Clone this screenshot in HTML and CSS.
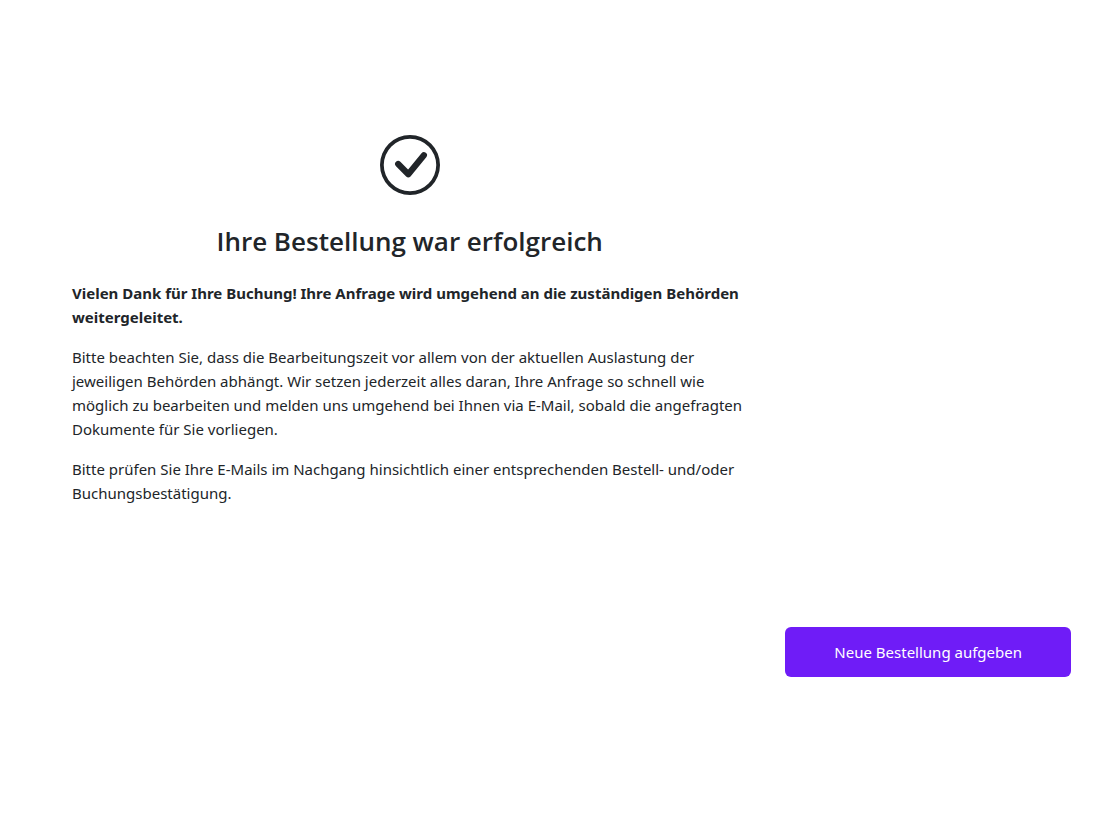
FILE: index.html
```
<!DOCTYPE html>
<html lang="de">
<head>
    <meta charset="UTF-8">
    <meta name="viewport" content="width=device-width, initial-scale=1.0">
    <title>Bestellung erfolgreich</title>
    <link rel="stylesheet" href="styles.css">
</head>
<body>
    <main class="page">
        <section class="confirmation">
            <!-- Check circle -->
            <svg class="confirmation-icon" viewBox="0 0 16 16" fill="currentColor" aria-hidden="true">
                <path d="M8 15A7 7 0 1 1 8 1a7 7 0 0 1 0 14zm0 1A8 8 0 1 0 8 0a8 8 0 0 0 0 16z"/>
                <path d="M4.85 7.75 7.55 10.45 11.7 5.4" fill="none" stroke="currentColor" stroke-width="1.65" stroke-linecap="round" stroke-linejoin="round"/>
            </svg>
            <h1 class="confirmation-title">Ihre Bestellung war erfolgreich</h1>
            <div class="confirmation-text">
                <p class="lead">Vielen Dank für Ihre Buchung! Ihre Anfrage wird umgehend an die zuständigen Behörden weitergeleitet.</p>
                <p>Bitte beachten Sie, dass die Bearbeitungszeit vor allem von der aktuellen Auslastung der jeweiligen Behörden abhängt. Wir setzen jederzeit alles daran, Ihre Anfrage so schnell wie möglich zu bearbeiten und melden uns umgehend bei Ihnen via E-Mail, sobald die angefragten Dokumente für Sie vorliegen.</p>
                <p>Bitte prüfen Sie Ihre E-Mails im Nachgang hinsichtlich einer entsprechenden Bestell- und/oder Buchungsbestätigung.</p>
            </div>
        </section>
        <div class="actions">
            <button class="order-button" type="button">Neue Bestellung aufgeben</button>
        </div>
    </main>
</body>
</html>
```

FILE: styles.css
```
* {
    box-sizing: border-box;
}

body {
    margin: 0;
    background-color: #ffffff;
    color: #212529;
    font-family: "Segoe UI", "Noto Sans", "Open Sans", sans-serif;
    font-size: 15px;
    line-height: 24px;
}

.page {
    padding: 135px 32px 40px;
}

.confirmation {
    width: 65%;
    margin-left: 40px;
    text-align: center;
}

.confirmation-icon {
    display: block;
    width: 60px;
    height: 60px;
    margin: 0 auto 30px;
}

.confirmation-title {
    margin: 0 0 24px;
    font-family: "Segoe UI", "Open Sans", sans-serif;
    font-size: 26px;
    font-weight: 600;
    line-height: 32px;
}

.confirmation-text {
    text-align: left;
}

.confirmation-text p {
    margin: 0 0 16px;
}

.confirmation-text .lead {
    font-weight: 700;
}

.actions {
    display: flex;
    justify-content: flex-end;
    margin-top: 122px;
}

.order-button {
    padding: 13px 49px;
    border: none;
    border-radius: 6px;
    background-color: #6f1cf7;
    color: #ffffff;
    font: inherit;
    cursor: pointer;
}

.order-button:hover {
    background-color: #5e14d6;
}
```
